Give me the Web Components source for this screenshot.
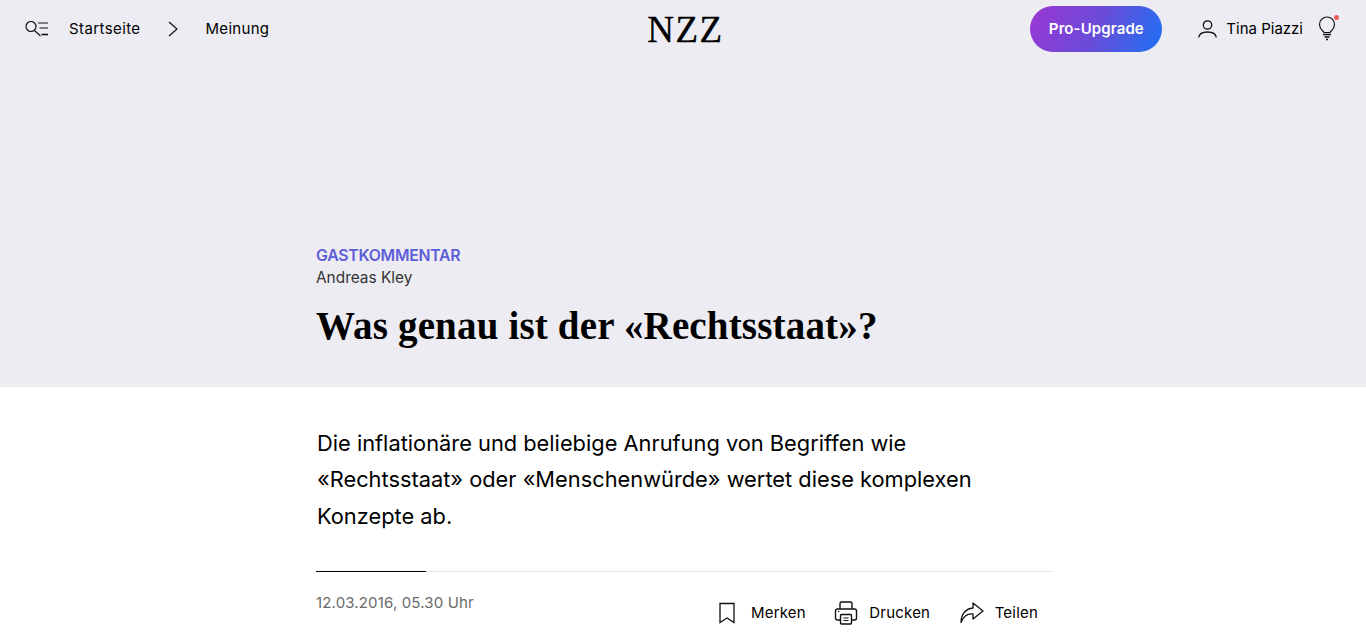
<!DOCTYPE html>
<html lang="de">
<head>
<meta charset="utf-8">
<title>Was genau ist der «Rechtsstaat»?</title>
<style>
	html, body { margin: 0; height: 640px; overflow: hidden; background: #fff; }
	body { font-family: "Inter", "Liberation Sans", sans-serif; color: #000; }
</style>
</head>
<body>
<nzz-page>
	<nzz-header slot="header"></nzz-header>
	<nzz-hero slot="hero" flag="GASTKOMMENTAR" author="Andreas Kley">Was genau ist der «Rechtsstaat»?</nzz-hero>
	<nzz-lead slot="lead">Die inflationäre und beliebige Anrufung von Begriffen wie «Rechtsstaat» oder «Menschenwürde» wertet diese komplexen Konzepte ab.</nzz-lead>
	<nzz-meta slot="meta" date="12.03.2016, 05.30 Uhr">
		<nzz-action icon="bookmark">Merken</nzz-action>
		<nzz-action icon="print">Drucken</nzz-action>
		<nzz-action icon="share">Teilen</nzz-action>
	</nzz-meta>
</nzz-page>

<script>
const icons = {
	bookmark: '<svg width="21" height="22" viewBox="0 0 21 22" fill="none" stroke="#111" stroke-width="1.300"><path d="M1 1.500h14v19l-7-4.500-7 4.500z"/></svg>',
	print: '<svg width="24" height="24" viewBox="0 0 24 24" fill="none" stroke="#111" stroke-width="1.400"><path d="M6 8V2.500A1.500 1.500 0 0 1 7.500 1h9A1.500 1.500 0 0 1 18 2.500V8"/><path d="M6.500 19H3.500a2 2 0 0 1-2-2V10a2 2 0 0 1 2-2h17a2 2 0 0 1 2 2v7a2 2 0 0 1-2 2h-3"/><rect x="6.500" y="13.500" width="11" height="9.500" rx="1"/><path d="M9.500 17h5M9.500 19.500h5" stroke-width="1.100"/><path d="M4 10.500h1.500" stroke-width="1.200"/></svg>',
	share: '<svg width="25" height="24" viewBox="0 0 25 24" fill="none" stroke="#111" stroke-width="1.300" stroke-linejoin="round"><path d="M2 21.500C2 13 7 7.500 14 7V2l10 8-10 8v-5c-5-.5-9.500 2-12 8.500z"/></svg>'
};

customElements.define('nzz-page', class extends HTMLElement {
	constructor() {
		super();
		this.attachShadow({ mode: 'open' }).innerHTML = `
			<style>
				:host { display: block; }
				.hero { height: 387px; background: #edecf2; display: flex; flex-direction: column; }
				.body { display: flex; flex-direction: column; align-items: center; padding-left: 2px; }
				.column { width: 736px; }
			</style>
			<div class="hero">
				<slot name="header"></slot>
				<slot name="hero"></slot>
			</div>
			<div class="body">
				<div class="column">
					<slot name="lead"></slot>
					<slot name="meta"></slot>
				</div>
			</div>`;
	}
});

customElements.define('nzz-header', class extends HTMLElement {
	constructor() {
		super();
		this.attachShadow({ mode: 'open' }).innerHTML = `
			<style>
				:host {
					display: grid;
					grid-template-columns: 1fr auto 1fr;
					align-items: center;
					height: 58px;
					padding: 0 28px 0 25px;
					font: 400 15px/20px "Inter", sans-serif;
					color: #000;
				}
				.left, .right { display: flex; align-items: center; }
				.right { justify-content: flex-end; }
				.search { margin-right: 20px; display: block; }
				.home { letter-spacing: .4px; }
				.section { letter-spacing: .3px; }
				.chevron { margin: 0 27px 0 28px; display: block; }
				.logo {
					font: 400 37px/56px "Liberation Serif", serif;
					letter-spacing: 1.500px;
					padding: 2px 0 0 8px;
					-webkit-text-stroke: .3px #000;
				}
				.pro {
					display: flex; align-items: center; justify-content: center;
					width: 132px; height: 46px; border-radius: 23px;
					background: linear-gradient(115deg, #9b37d3 0%, #6a4bd8 50%, #1d72f5 100%);
					color: #fff; font-weight: 600; letter-spacing: .1px;
					margin-right: 36px;
				}
				.user { margin-right: 9px; display: block; }
				.bulb { position: relative; margin-left: 15px; width: 20px; height: 26px; }
				.bulb svg { display: block; }
				.dot { position: absolute; right: -1px; top: -1px; width: 5px; height: 5px; border-radius: 50%; background: #ee5a5a; }
			</style>
			<div class="left">
				<svg class="search" width="24" height="16" viewBox="0 0 24 16" fill="none" stroke="#111" stroke-width="1.200"><circle cx="6" cy="5.500" r="5"/><path d="M9.500 9.500l6 5.500M13 2h10M14.500 7h8.500"/><path d="M16.500 13.500h6.500" stroke-width="1.600"/></svg>
				<span class="home">Startseite</span>
				<svg class="chevron" width="10" height="16" viewBox="0 0 10 16" fill="none" stroke="#111" stroke-width="1.200"><path d="M1 1l8 7-8 7"/></svg>
				<span class="section">Meinung</span>
			</div>
			<div class="logo">NZZ</div>
			<div class="right">
				<div class="pro">Pro-Upgrade</div>
				<svg class="user" width="19" height="18" viewBox="0 0 19 18" fill="none" stroke="#111" stroke-width="1.300"><circle cx="9.500" cy="5" r="4.200"/><path d="M.7 17.500c.5-4 4-5.500 8.800-5.500s8.300 1.500 8.800 5.500"/></svg>
				<span>Tina Piazzi</span>
				<div class="bulb">
					<svg width="20" height="26" viewBox="0 0 20 26" fill="none" stroke="#111" stroke-width="1.200"><path d="M6 16.500C5.500 15 1.500 13.500 1.500 8.500a7.500 7.500 0 0 1 15 0c0 5-4 6.500-4.500 8z"/><path d="M5 18.500h8M6.500 21h5M8 23.500h2" stroke-width="1.600"/></svg>
					<span class="dot"></span>
				</div>
			</div>`;
	}
});

customElements.define('nzz-hero', class extends HTMLElement {
	constructor() {
		super();
		this.attachShadow({ mode: 'open' }).innerHTML = `
			<style>
				:host {
					display: block;
					flex: 1;
					box-sizing: border-box;
					padding: 187px 0 0 316px;
				}
				.flag { font: 600 15.800px/22px "Inter", sans-serif; letter-spacing: -.25px; color: #5d5dd8; }
				.author { font: 400 15.400px/22px "Inter", sans-serif; color: #333; }
				h1 { margin: 15px 0 0; font: 700 39px/44px "Liberation Serif", serif; letter-spacing: .17px; color: #000; }
			</style>
			<div class="flag"></div>
			<div class="author"></div>
			<h1><slot></slot></h1>`;
		this.shadowRoot.querySelector('.flag').textContent = this.getAttribute('flag');
		this.shadowRoot.querySelector('.author').textContent = this.getAttribute('author');
	}
});

customElements.define('nzz-lead', class extends HTMLElement {
	constructor() {
		super();
		this.attachShadow({ mode: 'open' }).innerHTML = `
			<style>
				:host {
					display: block;
					padding: 37.500px 60px 0 1px;
					font: 400 21.820px/36.500px "Inter", sans-serif;
					color: #000;
				}
			</style>
			<slot></slot>`;
	}
});

customElements.define('nzz-meta', class extends HTMLElement {
	constructor() {
		super();
		this.attachShadow({ mode: 'open' }).innerHTML = `
			<style>
				:host { display: block; margin-top: 36.500px; }
				.rule { height: 1px; background: #e4e4e4; }
				.rule div { width: 110px; height: 1px; background: #000; }
				.row { display: flex; justify-content: space-between; padding: 0 14px 0 0; }
				.date { font: 400 15px/20px "Inter", sans-serif; letter-spacing: .15px; color: #6a6a6a; padding-top: 21px; }
				.actions { display: flex; gap: 28.500px; padding-top: 29px; }
			</style>
			<div class="rule"><div></div></div>
			<div class="row">
				<div class="date"></div>
				<div class="actions"><slot></slot></div>
			</div>`;
		this.shadowRoot.querySelector('.date').textContent = this.getAttribute('date');
	}
});

customElements.define('nzz-action', class extends HTMLElement {
	constructor() {
		super();
		this.attachShadow({ mode: 'open' }).innerHTML = `
			<style>
				:host {
					display: flex;
					align-items: center;
					gap: 11px;
					font: 400 15px/22px "Inter", sans-serif;
					letter-spacing: .2px;
					color: #000;
				}
				svg { display: block; }
			</style>
			${icons[this.getAttribute('icon')]}
			<slot></slot>`;
	}
});
</script>
</body>
</html>
